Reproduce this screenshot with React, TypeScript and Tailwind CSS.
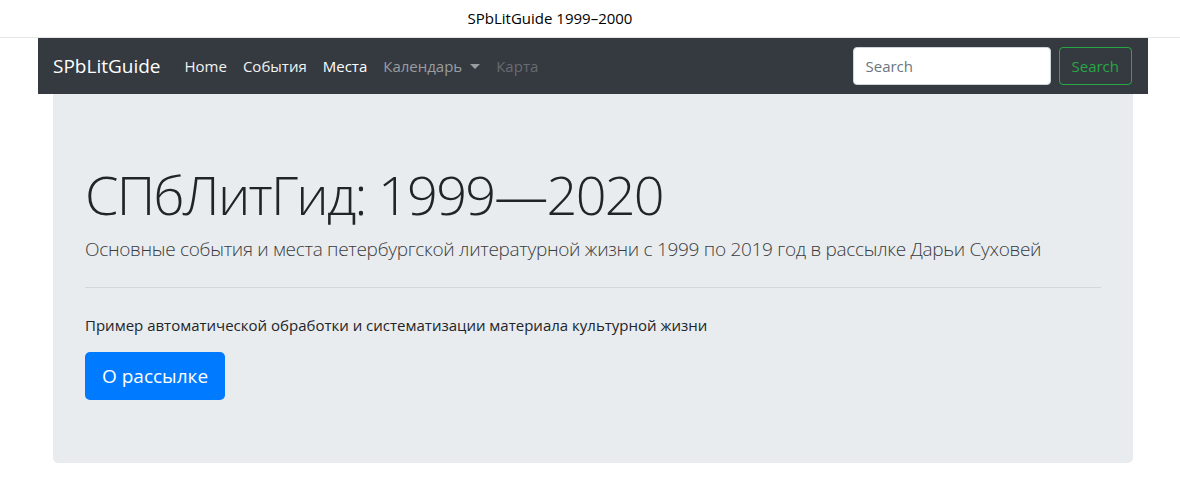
const App = () => {
    return (
        <div className="min-h-[494px] bg-white font-['Open_Sans',sans-serif] text-[#212529]">
            <div className="h-[38px] flex items-center justify-center pr-[80px] border-b border-[#e5e5e5] text-[15px] text-black">
                SPbLitGuide 1999–2000
            </div>
            <nav className="mx-[38px] w-[1110px] h-[56px] bg-[#343a40] flex items-center pl-[15px] pr-[16px]">
                <a className="text-[19px] text-white mr-[24px]">SPbLitGuide</a>
                <div className="flex items-center text-[15px] gap-[16px]">
                    <a className="text-[#f2f2f2]">Home</a>
                    <a className="text-[#f2f2f2]">События</a>
                    <a className="text-white">Места</a>
                    <a className="text-[#9a9da0] flex items-center">
                        Календарь
                        <span className="ml-[8px] border-x-[5px] border-x-transparent border-t-[5px] border-t-[#9a9da0]" />
                    </a>
                    <a className="text-[#686c70]">Карта</a>
                </div>
                <div className="ml-auto flex items-center gap-[8px]">
                    <input
                        placeholder="Search"
                        className="w-[198px] h-[38px] rounded-[4px] bg-white px-[12px] text-[15px] border border-[#ced4da] placeholder:text-[#6c757d] outline-none"
                    />
                    <button className="h-[38px] px-[12px] rounded-[4px] border border-[#28a745] text-[#28a745] text-[15px]">
                        Search
                    </button>
                </div>
            </nav>
            <div className="mx-[53px] w-[1080px] h-[369px] bg-[#e9ecef] rounded-b-[5px] px-[32px] pt-[68px]">
                <h1 className="text-[54px] font-light leading-[1.2] text-[#212529] tracking-[-1.75px]">СПбЛитГид: 1999—2020</h1>
                <p className="mt-[8px] text-[19px] font-light text-[#3a3d40] tracking-[-0.3px]">
                    Основные события и места петербургской литературной жизни с 1999 по 2019 год в рассылке Дарьи Суховей
                </p>
                <hr className="mt-[24px] border-t border-[#d4d7da]" />
                <p className="mt-[26px] text-[15px]">Пример автоматической обработки и систематизации материала культурной жизни</p>
                <button className="mt-[15px] h-[48px] px-[17px] rounded-[5px] bg-[#007bff] text-white text-[19px]">
                    О рассылке
                </button>
            </div>
        </div>
    );
};

export default App;
